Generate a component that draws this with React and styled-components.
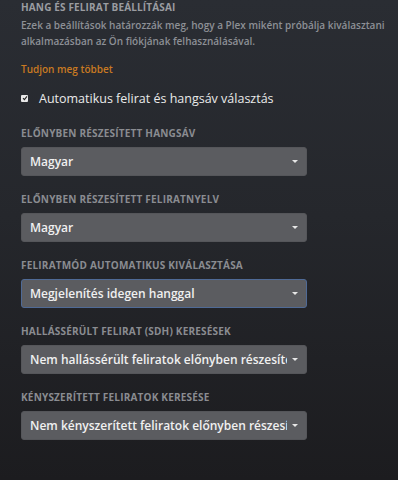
import styled, { createGlobalStyle } from "styled-components";

const GlobalStyle = createGlobalStyle`
    html, body {
        margin: 0;
        padding: 0;
        height: 100%;
        background: #1e1f22;
    }
    body {
        font-family: "Open Sans", "Noto Sans", sans-serif;
    }
`;

const Page = styled.div`
    width: 398px;
    height: 480px;
    box-sizing: border-box;
    padding: 0 0 0 21px;
    overflow: hidden;
    background: linear-gradient(180deg, #2a2d33 0%, #25272c 45%, #1c1c1f 100%);
`;

const Title = styled.div`
    font-size: 10px;
    font-weight: 700;
    line-height: 14px;
    letter-spacing: 0.15px;
    color: #9a9ca1;
    text-transform: uppercase;
`;

const Description = styled.p`
    margin: 3px 0 0;
    font-size: 10px;
    font-weight: 600;
    line-height: 16px;
    color: #8d9096;
    white-space: nowrap;
`;

const MoreLink = styled.a`
    display: block;
    margin-top: 12px;
    font-size: 10px;
    font-weight: 600;
    line-height: 16px;
    color: #c97a22;
    text-decoration: none;
`;

const CheckRow = styled.label`
    display: flex;
    align-items: center;
    gap: 11px;
    margin-top: 12px;
    height: 18px;
    font-size: 12.5px;
    color: #eaeaea;
`;

const CheckBox = styled.span`
    width: 7px;
    height: 7px;
    background: #e8e8e8;
    border-radius: 1px;
    display: flex;
    align-items: center;
    justify-content: center;
`;

const Field = styled.div`
    margin-top: ${p => p.$first ? 19 : 16}px;
`;

const FieldLabel = styled.div`
    font-size: 10px;
    font-weight: 700;
    line-height: 14px;
    letter-spacing: 0.2px;
    color: #8a8c91;
    text-transform: uppercase;
`;

const SelectBox = styled.div`
    margin-top: 7px;
    width: 286px;
    height: 29px;
    box-sizing: border-box;
    display: flex;
    align-items: center;
    padding: 0 8px;
    gap: 5px;
    border-radius: 3px;
    background: #5b5c60;
    border: 1px solid ${p => p.$focused ? "#4f6a96" : "#55565a"};
    color: #f0f0f0;
    font-size: 12px;
    font-weight: 600;
`;

const SelectText = styled.span`
    flex: 1;
    overflow: hidden;
    white-space: nowrap;
`;

const Caret = styled.span`
    width: 0;
    height: 0;
    border-left: 3px solid transparent;
    border-right: 3px solid transparent;
    border-top: 3px solid #e6e6e6;
    flex-shrink: 0;
`;

const fields = [
    { label: "Előnyben részesített hangsáv", value: "Magyar" },
    { label: "Előnyben részesített feliratnyelv", value: "Magyar" },
    { label: "Feliratmód automatikus kiválasztása", value: "Megjelenítés idegen hanggal", focused: true },
    { label: "Hallássérült felirat (SDH) keresések", value: "Nem hallássérült feliratok előnyben részesítése" },
    { label: "Kényszerített feliratok keresése", value: "Nem kényszerített feliratok előnyben részesítése" },
];

const App = () => (
    <Page>
        <GlobalStyle />
        <Title>Hang és felirat beállításai</Title>
        <Description>
            Ezek a beállítások határozzák meg, hogy a Plex miként próbálja kiválasztani<br />
            alkalmazásban az Ön fiókjának felhasználásával.
        </Description>
        <MoreLink href="#">Tudjon meg többet</MoreLink>
        <CheckRow>
            <CheckBox>
                <svg width="6" height="6" viewBox="0 0 6 6">
                    <path d="M1 3.2 L2.4 4.6 L5 1.4" stroke="#222" strokeWidth="1.1" fill="none" />
                </svg>
            </CheckBox>
            Automatikus felirat és hangsáv választás
        </CheckRow>
        {fields.map((f, i) => (
            <Field key={i} $first={i === 0}>
                <FieldLabel>{f.label}</FieldLabel>
                <SelectBox $focused={f.focused}>
                    <SelectText>{f.value}</SelectText>
                    <Caret />
                </SelectBox>
            </Field>
        ))}
    </Page>
);

export default App;
